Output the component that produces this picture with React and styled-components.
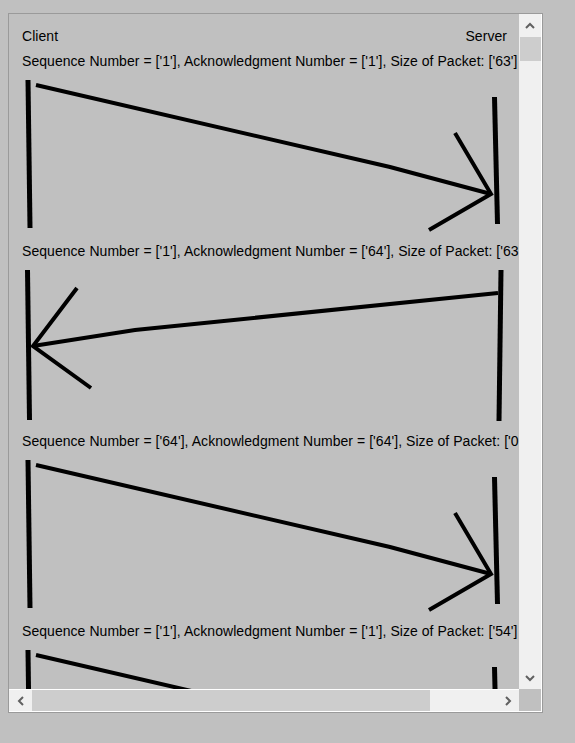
import styled, {createGlobalStyle} from "styled-components";

const GlobalStyle = createGlobalStyle`
  html, body {
    margin: 0;
    padding: 0;
    background: #c0c0c0;
  }
`

const Frame = styled.div`
  box-sizing: border-box;
  margin: 13px 0 0 8px;
  width: 535px;
  height: 700px;
  border: 1px solid #9a9a9a;
  padding: 0 1px 1px 0;
  background: #ffffff;
  display: grid;
  grid-template-columns: 510px 22px;
  grid-template-rows: 675px 22px;
`

const Viewport = styled.div`
  background: #c0c0c0;
  overflow: hidden;
  padding-top: 12px;
  box-sizing: border-box;
  font-family: "Liberation Sans", Arial, sans-serif;
  font-size: 14px;
  letter-spacing: 0.05px;
  color: #000;
`

const Header = styled.div`
  display: flex;
  justify-content: space-between;
  height: 25px;
  line-height: 21px;
  padding: 0 12px 0 13px;
`

const Block = styled.div`
  display: flex;
  flex-direction: column;
`

const Label = styled.div`
  height: 20px;
  line-height: 21px;
  padding-left: 13px;
  white-space: nowrap;
`

const Drawing = styled.svg`
  display: block;
  width: 510px;
  height: 170px;
  flex-shrink: 0;
`

const VBar = styled.div`
  background: #f0f0f0;
  display: flex;
  flex-direction: column;
`

const HBar = styled.div`
  background: #f0f0f0;
  border-top: 1px solid #ffffff;
  display: flex;
`

const Corner = styled.div`
  background: #c0c0c0;
`

const ArrowButton = styled.div`
  flex: 0 0 23px;
  display: flex;
  align-items: center;
  justify-content: center;
`

const Track = styled.div`
  flex: 1;
  display: flex;
  flex-direction: ${props => props.$vertical ? 'column' : 'row'};
`

const Thumb = styled.div`
  background: #cdcdcd;
  flex: 0 0 ${props => props.$size}px;
  margin: ${props => props.$vertical ? '0 0 0 1px' : '0'};
`

const Chevron = ({dir}) => {
  const paths = {
    up: "M1 6 L5 2 L9 6",
    down: "M1 2 L5 6 L9 2",
    left: "M6 1 L2 5 L6 9",
    right: "M2 1 L6 5 L2 9",
  }
  const horizontal = dir === 'left' || dir === 'right'
  return (
    <svg width={horizontal ? 8 : 10} height={horizontal ? 10 : 8} viewBox={horizontal ? "0 0 8 10" : "0 0 10 8"}>
      <path d={paths[dir]} fill="none" stroke="#606060" strokeWidth="2"/>
    </svg>
  )
}

const ToServer = () => (
  <g stroke="#000" fill="none">
    <line x1="19" y1="9" x2="21" y2="157" strokeWidth="5"/>
    <line x1="485.5" y1="26" x2="488.5" y2="153" strokeWidth="5"/>
    <polyline points="27,14 381,96 482,123" strokeWidth="4"/>
    <polyline points="446,62 482,123 420,159" strokeWidth="4"/>
  </g>
)

const ToClient = () => (
  <g stroke="#000" fill="none">
    <line x1="18.5" y1="9" x2="20.5" y2="159" strokeWidth="5"/>
    <line x1="492" y1="9" x2="490" y2="160" strokeWidth="5"/>
    <polyline points="489,32 126,69 24,85" strokeWidth="4"/>
    <polyline points="68,27 24,85 82,127" strokeWidth="4"/>
  </g>
)

const packets = [
  {id: 1, seq: '1', ack: '1', size: '63', toServer: true},
  {id: 2, seq: '1', ack: '64', size: '63', toServer: false},
  {id: 3, seq: '64', ack: '64', size: '0', toServer: true},
  {id: 4, seq: '1', ack: '1', size: '54', toServer: true},
]

export default function App() {
  return (
    <>
      <GlobalStyle/>
      <Frame>
        <Viewport>
          <Header>
            <span>Client</span>
            <span>Server</span>
          </Header>
          {packets.map(p => (
            <Block key={p.id}>
              <Label>
                Sequence Number = ['{p.seq}'], Acknowledgment Number = ['{p.ack}'], Size of Packet: ['{p.size}']
              </Label>
              <Drawing viewBox="0 0 510 170">
                {p.toServer ? <ToServer/> : <ToClient/>}
              </Drawing>
            </Block>
          ))}
        </Viewport>
        <VBar>
          <ArrowButton><Chevron dir="up"/></ArrowButton>
          <Track $vertical>
            <Thumb $vertical $size={24}/>
          </Track>
          <ArrowButton><Chevron dir="down"/></ArrowButton>
        </VBar>
        <HBar>
          <ArrowButton><Chevron dir="left"/></ArrowButton>
          <Track>
            <Thumb $size={398}/>
          </Track>
          <ArrowButton><Chevron dir="right"/></ArrowButton>
        </HBar>
        <Corner/>
      </Frame>
    </>
  )
}
